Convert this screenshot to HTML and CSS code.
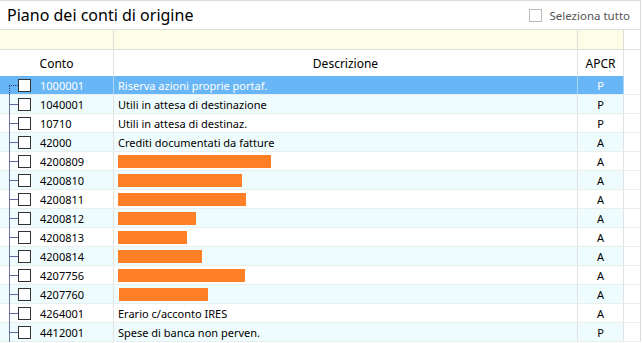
FILE: index.html
```html
<!DOCTYPE html>
<html lang="it">

<head>
    <meta charset="UTF-8">
    <title>Piano dei conti di origine</title>
    <link rel="stylesheet" href="styles.css">
</head>

<body>
    <div class="panel">
        <div class="title-bar">
            <h2>Piano dei conti di origine</h2>
            <label class="select-all"><span class="box light"></span>Seleziona tutto</label>
        </div>

        <div class="grid-row filter-row">
            <div class="cell"></div>
            <div class="cell"></div>
            <div class="cell"></div>
            <div class="cell last"></div>
        </div>

        <div class="grid-row head-row">
            <div class="cell center">Conto</div>
            <div class="cell center">Descrizione</div>
            <div class="cell center">APCR</div>
            <div class="cell last"></div>
        </div>

        <div class="grid-row data-row selected first">
            <div class="cell tree"><span class="box"></span>1000001</div>
            <div class="cell desc">Riserva azioni proprie portaf.</div>
            <div class="cell center">P</div>
            <div class="cell last"></div>
        </div>
        <div class="grid-row data-row alt">
            <div class="cell tree"><span class="box"></span>1040001</div>
            <div class="cell desc">Utili in attesa di destinazione</div>
            <div class="cell center">P</div>
            <div class="cell last"></div>
        </div>
        <div class="grid-row data-row">
            <div class="cell tree"><span class="box"></span>10710</div>
            <div class="cell desc">Utili in attesa di destinaz.</div>
            <div class="cell center">P</div>
            <div class="cell last"></div>
        </div>
        <div class="grid-row data-row alt">
            <div class="cell tree"><span class="box"></span>42000</div>
            <div class="cell desc">Crediti documentati da fatture</div>
            <div class="cell center">A</div>
            <div class="cell last"></div>
        </div>
        <div class="grid-row data-row">
            <div class="cell tree"><span class="box"></span>4200809</div>
            <div class="cell desc"><span class="redact" style="width: 153px"></span></div>
            <div class="cell center">A</div>
            <div class="cell last"></div>
        </div>
        <div class="grid-row data-row alt">
            <div class="cell tree"><span class="box"></span>4200810</div>
            <div class="cell desc"><span class="redact" style="width: 124px"></span></div>
            <div class="cell center">A</div>
            <div class="cell last"></div>
        </div>
        <div class="grid-row data-row">
            <div class="cell tree"><span class="box"></span>4200811</div>
            <div class="cell desc"><span class="redact" style="width: 128px"></span></div>
            <div class="cell center">A</div>
            <div class="cell last"></div>
        </div>
        <div class="grid-row data-row alt">
            <div class="cell tree"><span class="box"></span>4200812</div>
            <div class="cell desc"><span class="redact" style="width: 78px"></span></div>
            <div class="cell center">A</div>
            <div class="cell last"></div>
        </div>
        <div class="grid-row data-row">
            <div class="cell tree"><span class="box"></span>4200813</div>
            <div class="cell desc"><span class="redact" style="width: 69px"></span></div>
            <div class="cell center">A</div>
            <div class="cell last"></div>
        </div>
        <div class="grid-row data-row alt">
            <div class="cell tree"><span class="box"></span>4200814</div>
            <div class="cell desc"><span class="redact" style="width: 84px"></span></div>
            <div class="cell center">A</div>
            <div class="cell last"></div>
        </div>
        <div class="grid-row data-row">
            <div class="cell tree"><span class="box"></span>4207756</div>
            <div class="cell desc"><span class="redact" style="width: 127px"></span></div>
            <div class="cell center">A</div>
            <div class="cell last"></div>
        </div>
        <div class="grid-row data-row alt">
            <div class="cell tree"><span class="box"></span>4207760</div>
            <div class="cell desc"><span class="redact shift" style="width: 89px"></span></div>
            <div class="cell center">A</div>
            <div class="cell last"></div>
        </div>
        <div class="grid-row data-row">
            <div class="cell tree"><span class="box"></span>4264001</div>
            <div class="cell desc">Erario c/acconto IRES</div>
            <div class="cell center">A</div>
            <div class="cell last"></div>
        </div>
        <div class="grid-row data-row alt">
            <div class="cell tree"><span class="box"></span>4412001</div>
            <div class="cell desc">Spese di banca non perven.</div>
            <div class="cell center">P</div>
            <div class="cell last"></div>
        </div>
    </div>
</body>

</html>
```

FILE: styles.css
```css
body {
    margin: 0;
    font-family: "Noto Sans", "Open Sans", sans-serif;
    font-size: 11px;
    color: #000000;
    background-color: #ffffff;
    overflow: hidden;
}

.panel {
    width: 641px;
    border-top: 1px solid #dcdcdc;
    border-right: 1px solid #dcdcdc;
    box-sizing: border-box;
}

.title-bar {
    height: 29px;
    display: flex;
    align-items: center;
    justify-content: space-between;
    padding: 0 10px 0 7px;
    border-bottom: 1px solid #dedede;
    box-sizing: border-box;
}

.title-bar h2 {
    margin: 0;
    font-size: 16px;
    font-weight: normal;
    color: #000000;
}

.select-all {
    display: flex;
    align-items: center;
    gap: 7px;
    color: #555555;
    font-size: 11.5px;
}

.box {
    display: inline-block;
    width: 13px;
    height: 13px;
    border: 1px solid #333333;
    background-color: #ffffff;
    box-sizing: border-box;
}

.box.light {
    border-color: #bbbbbb;
}

.grid-row {
    display: grid;
    grid-template-columns: 114px 464px 46px 1fr;
    box-sizing: border-box;
}

.cell {
    display: flex;
    align-items: center;
    border-right: 1px solid #e2e2e2;
    box-sizing: border-box;
    white-space: nowrap;
}

.cell.last {
    border-right: none;
}

.center {
    justify-content: center;
}

.filter-row {
    height: 20px;
    border-bottom: 1px solid #dedede;
}

.filter-row .cell {
    background-color: #fefde8;
    border-right-color: #dedede;
}

.filter-row .cell.last {
    background-color: #ffffff;
}

.head-row {
    height: 26px;
}

.head-row .cell {
    font-size: 12px;
    color: #000000;
}

.data-row {
    height: 19px;
    border-bottom: 1px solid #e9eeee;
}

.data-row.alt .cell {
    background-color: #effcfd;
}

.data-row.selected .cell {
    background-color: #68b6f6;
    color: #ffffff;
    border-right-color: #a8d4f8;
}

.data-row .cell.last {
    background-color: #ffffff;
}

.desc {
    padding-left: 4px;
}

/* colonna ad albero */
.tree {
    position: relative;
    padding-left: 18px;
}

.tree .box {
    margin-right: 9px;
}

.tree::before {
    content: "";
    position: absolute;
    left: 9px;
    top: 0;
    bottom: -1px;
    border-left: 1px solid #7272a8;
}

.tree::after {
    content: "";
    position: absolute;
    left: 9px;
    top: 9px;
    width: 9px;
    border-top: 1px solid #6464a0;
}

.first .tree::before {
    top: 9px;
    border-left: 1px dotted #2a3a78;
}

.first .tree::after {
    border-top: 1px dotted #2a3a78;
}

.redact {
    display: block;
    height: 13px;
    background-color: #ff7f27;
}

.redact.shift {
    margin-left: 1px;
}
```
